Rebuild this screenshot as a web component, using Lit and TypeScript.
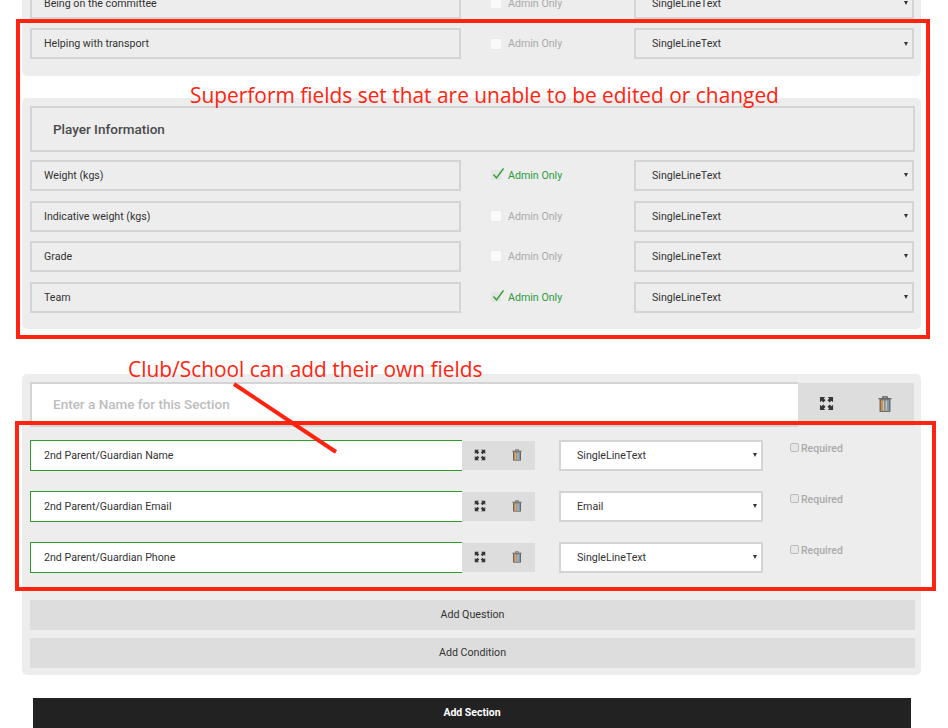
import { LitElement, html, css, svg } from "lit";
import { customElement } from "lit/decorators.js";

const expandIcon = (size: number) => html`<svg class="ico" width=${size} height=${size} viewBox="0 0 16 16" aria-hidden="true">
  <path fill="#363636" d="M1 1h5.6L5.1 2.7 7 4.6 4.6 7 2.7 5.1 1 6.6zM15 1v5.6l-1.7-1.5L11.4 7 9 4.6l1.9-1.9L9.4 1zM1 15V9.4l1.7 1.5L4.6 9 7 11.4l-1.9 1.9L6.6 15zM15 15H9.4l1.5-1.7L9 11.4 11.4 9l1.9 1.9L15 9.4z"/>
</svg>`;

const trashIcon = (w: number, h: number) => html`<svg class="ico" width=${w} height=${h} viewBox="0 0 14 16" aria-hidden="true">
  ${svg`<path fill="none" stroke="#555" stroke-width="1.2" d="M4.8 2V.8h4.4V2"/>
  <rect x="0.5" y="2" width="13" height="1.4" fill="#666"/>
  <rect x="1.6" y="3.4" width="10.8" height="12.4" fill="#5a5148"/>
  <rect x="2.8" y="4.4" width="8.4" height="10.4" fill="#c9c3b4"/>
  <rect x="2.8" y="4.4" width="2" height="10.4" fill="#c98d4e"/>
  <rect x="6" y="4.4" width="1.6" height="10.4" fill="#8d8a7c"/>
  <rect x="9" y="4.4" width="2.2" height="10.4" fill="#6f9cc0"/>`}
</svg>`;

@customElement("app-root")
export class AppRoot extends LitElement {
  static styles = css`
    :host {
      display: block;
      position: relative;
      height: 728px;
      overflow: hidden;
      background: #fff;
      font-family: Roboto, "Liberation Sans", sans-serif;
      font-size: 10.65px;
      color: #333;
    }
    .page {
      margin-top: -20.5px;
      display: flex;
      flex-direction: column;
      padding-left: 22px;
      width: 899px;
    }
    .panel {
      background: #ededed;
      border-radius: 5px;
      padding: 8px 6px 17px 8px;
      display: flex;
      flex-direction: column;
    }
    .first { gap: 9.5px; }
    .second { margin-top: 21.5px; padding-bottom: 16px; }
    .second .row { margin-top: 9px; }
    .second .row.wide { margin-top: 10px; }
    .second .heading + .row { margin-top: 8px; }
    .third { margin-top: 45px; padding-bottom: 7px; }
    .heading {
      height: 46px;
      box-sizing: border-box;
      border: 2px solid #d4d4d4;
      padding-left: 21px;
      display: flex;
      align-items: center;
      font-size: 13.5px;
      font-weight: 500;
      color: #4a4a4a;
    }
    .row {
      display: grid;
      grid-template-columns: 431px 173px 280px;
      height: 31px;
    }
    .field, .select {
      box-sizing: border-box;
      border: 2px solid #d4d4d4;
      display: flex;
      align-items: center;
      position: relative;
      height: 100%;
    }
    .field { padding-left: 12px; }
    .select { padding-left: 16px; }
    .select::after {
      content: "";
      position: absolute;
      right: 4px;
      top: 50%;
      margin-top: -2px;
      border-left: 2px solid transparent;
      border-right: 2px solid transparent;
      border-top: 4px solid #333;
    }
    .admin {
      display: flex;
      align-items: center;
      padding-left: 30px;
      gap: 7px;
      color: #aaa;
      position: relative;
    }
    .admin.on { color: #2b9a3c; }
    .box {
      width: 10px;
      height: 10px;
      background: #fafafa;
      border-radius: 1px;
      flex: none;
    }
    .admin.on .box { background: #e4e4e4; }
    .tick {
      position: absolute;
      left: 31px;
      top: 7px;
    }
    .name-row {
      display: flex;
      height: 45px;
      margin-bottom: 13px;
    }
    .name {
      flex: none;
      width: 768px;
      box-sizing: border-box;
      background: #fff;
      border: 2px solid #d4d4d4;
      border-right: none;
      padding-left: 21px;
      display: flex;
      align-items: center;
      font-size: 13.5px;
      font-weight: 500;
      color: #bdbdbd;
    }
    .name-tools {
      width: 116px;
      background: #ddd;
      margin: 1px 0;
      display: flex;
      align-items: center;
      padding: 0 0 1px 21px;
      gap: 44px;
      box-sizing: border-box;
    }
    .q-list { display: flex; flex-direction: column; gap: 19.5px; margin-bottom: 26.5px; }
    .q {
      display: flex;
      height: 31.5px;
    }
    .q-input {
      width: 432px;
      box-sizing: border-box;
      background: #fff;
      border: 1px solid #2a9d2a;
      border-right: none;
      padding-left: 13px;
      display: flex;
      align-items: center;
    }
    .q-tools {
      width: 73px;
      background: #ddd;
      margin: 1px 0;
      display: flex;
      align-items: center;
      padding: 0 0 1px 12px;
      gap: 26px;
      box-sizing: border-box;
    }
    .q .select {
      background: #fff;
      width: 204px;
      margin-left: 24px;
    }
    .req {
      margin-left: 27px;
      display: flex;
      align-items: flex-start;
      gap: 2px;
      color: #aaa;
      padding-top: 2px;
      line-height: 13px;
      font-weight: 500;
      font-size: 10.5px;
    }
    .req-box {
      width: 7px;
      height: 7px;
      margin-top: 1px;
      border: 1px solid #bbb;
      border-radius: 2px;
      background: #e6e6e6;
    }
    .btn {
      height: 30px;
      background: #ddd;
      display: flex;
      align-items: center;
      justify-content: center;
      width: 885px;
    }
    .btn + .btn { margin-top: 8px; }
    .add-section {
      margin: 23px 0 0 11px;
      width: 878px;
      height: 30px;
      background: #222;
      color: #fff;
      font-weight: 700;
      font-size: 10.5px;
      display: flex;
      align-items: center;
      justify-content: center;
    }
    .ico { display: block; flex: none; }
    .note {
      position: absolute;
      box-sizing: border-box;
      border: 4px solid #ff2410;
      pointer-events: none;
    }
    .n1 { left: 16px; top: 19px; width: 914px; height: 320px; }
    .n2 { left: 15px; top: 421px; width: 921px; height: 170px; }
    .label {
      position: absolute;
      color: #ff2410;
      font-family: "Open Sans", sans-serif;
      font-size: 20.9px;
      line-height: 28px;
      white-space: nowrap;
    }
    .l1 { left: 190px; top: 81px; }
    .l2 { left: 128px; top: 355px; }
    .arrow { position: absolute; left: 0; top: 0; pointer-events: none; }
  `;

  private lockedRow(name: string, on = false, wide = false) {
    return html`<div class="row ${wide ? "wide" : ""}">
      <div class="field">${name}</div>
      <div class="admin ${on ? "on" : ""}">
        <span class="box"></span>
        ${on
          ? html`<svg class="tick" width="13" height="13" viewBox="0 0 13 13" aria-hidden="true"><path fill="none" stroke="#2a9d2a" stroke-width="1.3" d="M1.5 7.5 4.5 11 11.5 1.5"/></svg>`
          : ""}
        <span>Admin Only</span>
      </div>
      <div class="select">SingleLineText</div>
    </div>`;
  }

  private question(name: string, type: string) {
    return html`<div class="q">
      <div class="q-input">${name}</div>
      <div class="q-tools">${expandIcon(12)}${trashIcon(10, 12)}</div>
      <div class="select">${type}</div>
      <div class="req"><span class="req-box"></span><span>Required</span></div>
    </div>`;
  }

  render() {
    return html`
      <div class="page">
        <section class="panel first">
          ${this.lockedRow("Being on the committee")}
          ${this.lockedRow("Helping with transport")}
        </section>
        <section class="panel second">
          <div class="heading">Player Information</div>
          ${this.lockedRow("Weight (kgs)", true)}
          ${this.lockedRow("Indicative weight (kgs)", false, true)}
          ${this.lockedRow("Grade")}
          ${this.lockedRow("Team", true, true)}
        </section>
        <section class="panel third">
          <div class="name-row">
            <div class="name">Enter a Name for this Section</div>
            <div class="name-tools">${expandIcon(15)}${trashIcon(14, 16)}</div>
          </div>
          <div class="q-list">
            ${this.question("2nd Parent/Guardian Name", "SingleLineText")}
            ${this.question("2nd Parent/Guardian Email", "Email")}
            ${this.question("2nd Parent/Guardian Phone", "SingleLineText")}
          </div>
          <div class="btn">Add Question</div>
          <div class="btn">Add Condition</div>
        </section>
        <div class="add-section">Add Section</div>
      </div>
      <div class="note n1"></div>
      <div class="note n2"></div>
      <div class="label l1">Superform fields set that are unable to be edited or changed</div>
      <div class="label l2">Club/School can add their own fields</div>
      <svg class="arrow" width="948" height="728" aria-hidden="true"><line x1="234" y1="384" x2="336" y2="452" stroke="#ff2410" stroke-width="4"/></svg>
    `;
  }
}
